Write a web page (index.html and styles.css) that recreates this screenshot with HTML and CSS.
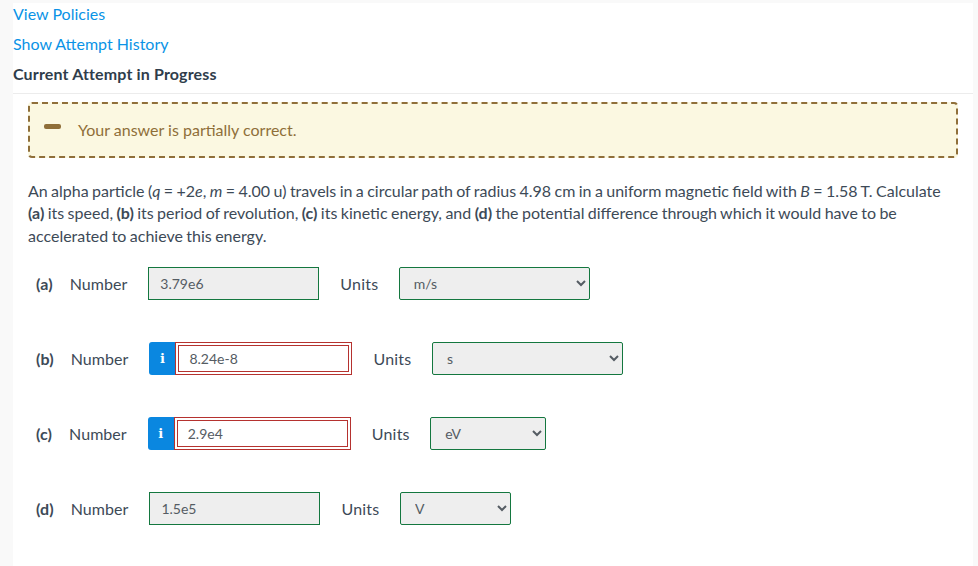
FILE: index.html
```html
<!DOCTYPE html>
<html lang="en">
<head>
<meta charset="utf-8">
<title>Current Attempt in Progress</title>
<link rel="stylesheet" href="styles.css">
</head>
<body>
<main class="card">
  <p class="link-row"><a href="#">View Policies</a></p>
  <p class="link-row"><a href="#">Show Attempt History</a></p>
  <h2 class="attempt-title">Current Attempt in Progress</h2>
  <div class="content">
    <div class="notice">
      <span class="notice-icon"></span>
      <span class="notice-text">Your answer is partially correct.</span>
    </div>
    <p class="question">An alpha particle (<i>q</i> = +2<i>e</i>, <i>m</i> = 4.00 u) travels in a circular path of radius 4.98 cm in a uniform magnetic field with <i>B</i> = 1.58 T. Calculate <b>(a)</b> its speed, <b>(b)</b> its period of revolution, <b>(c)</b> its kinetic energy, and <b>(d)</b> the potential difference through which it would have to be accelerated to achieve this energy.</p>
    <div class="answers">
      <div class="answer">
        <b class="part">(a)</b><span class="label">Number</span>
        <input class="value value-ok" type="text" value="3.79e6" readonly>
        <span class="units">Units</span>
        <select class="unit-select unit-a" disabled><option>m/s</option></select>
      </div>
      <div class="answer">
        <b class="part">(b)</b><span class="label">Number</span>
        <div class="hint-group">
          <span class="hint">i</span>
          <div class="wrong"><input class="wrong-input" type="text" value="8.24e-8"></div>
        </div>
        <span class="units">Units</span>
        <select class="unit-select unit-b" disabled><option>s</option></select>
      </div>
      <div class="answer">
        <b class="part">(c)</b><span class="label">Number</span>
        <div class="hint-group">
          <span class="hint">i</span>
          <div class="wrong"><input class="wrong-input" type="text" value="2.9e4"></div>
        </div>
        <span class="units">Units</span>
        <select class="unit-select unit-c" disabled><option>eV</option></select>
      </div>
      <div class="answer">
        <b class="part">(d)</b><span class="label">Number</span>
        <input class="value value-ok" type="text" value="1.5e5" readonly>
        <span class="units">Units</span>
        <select class="unit-select unit-d" disabled><option>V</option></select>
      </div>
    </div>
  </div>
</main>
</body>
</html>
```
FILE: styles.css
```css
* { box-sizing: border-box; }
html, body { height: 100%; }
body {
  margin: 0;
  padding: 3px 5px 0 13px;
  background: #f9f9f9;
  font-family: Lato, "Open Sans", sans-serif;
  font-size: 16px;
  color: #3d4a57;
  overflow: hidden;
}
.card {
  background: #fff;
  height: 100%;
}
.link-row {
  margin: 0;
  height: 30px;
  line-height: 21px;
}
.link-row a {
  color: #0a93e6;
  text-decoration: none;
}
.attempt-title {
  margin: 0;
  height: 31px;
  font-size: 16px;
  font-weight: 700;
  letter-spacing: 0.15px;
  line-height: 21px;
  border-bottom: 1px solid #ececec;
  color: #2f3d4b;
}
.content {
  padding: 8px 15px 0;
}
.notice {
  display: flex;
  height: 56px;
  border: 2px dashed #8f6f39;
  border-radius: 4px;
  background: #fbf8e1;
  color: #8f6f39;
  padding: 0 0 0 14px;
}
.notice-icon {
  width: 17px;
  height: 5px;
  margin-top: 20px;
  border-radius: 2px;
  background: #8f6f39;
}
.notice-text {
  margin-left: 17px;
  line-height: 23px;
  padding-top: 14px;
}
.question {
  margin: 21.9px 0 0;
  line-height: 22.5px;
  width: 925px;
  word-spacing: -0.7px;
}
.answers {
  margin-top: 19.5px;
  padding-left: 8px;
  display: flex;
  flex-direction: column;
  gap: 42px;
}
.answer {
  display: flex;
  align-items: center;
  height: 33px;
}
.part { font-weight: 700; letter-spacing: 0.1px; }
.label { margin-left: 17px; letter-spacing: 0.05px; }
.value, .wrong-input {
  font-family: inherit;
  font-size: 14px;
  color: #555c63;
  outline: 0;
}
.value {
  width: 171px;
  height: 33px;
  margin-left: 21px;
  padding: 0 11px;
  background: #eee;
  border: 1px solid #14773f;
}
.units { margin-left: 21px; letter-spacing: 0.2px; }
.hint-group {
  display: flex;
  margin-left: 21px;
  height: 33px;
}
.hint {
  width: 26px;
  height: 33px;
  background: #0a87e0;
  border-radius: 3px 0 0 3px;
  color: #fff;
  font-family: "DejaVu Serif", serif;
  font-weight: 700;
  font-size: 13px;
  line-height: 34px;
  text-align: center;
}
.wrong {
  width: 177px;
  height: 33px;
  padding: 2px;
  border: 1px solid #b5322f;
}
.wrong-input {
  display: block;
  width: 100%;
  height: 100%;
  padding: 0 10px;
  background: #fff;
  border: 1px solid #b5322f;
}
.unit-select {
  height: 33px;
  margin-left: 20.5px;
  padding: 0 0 0 10px;
  font-family: inherit;
  font-size: 14px;
  color: #555c63;
  opacity: 1;
  background-color: #eee;
  border: 1px solid #14773f;
  border-radius: 2px;
}
.unit-a { width: 191px; }
.unit-b { width: 191px; }
.unit-c { width: 116px; }
.unit-d { width: 111px; }
```
